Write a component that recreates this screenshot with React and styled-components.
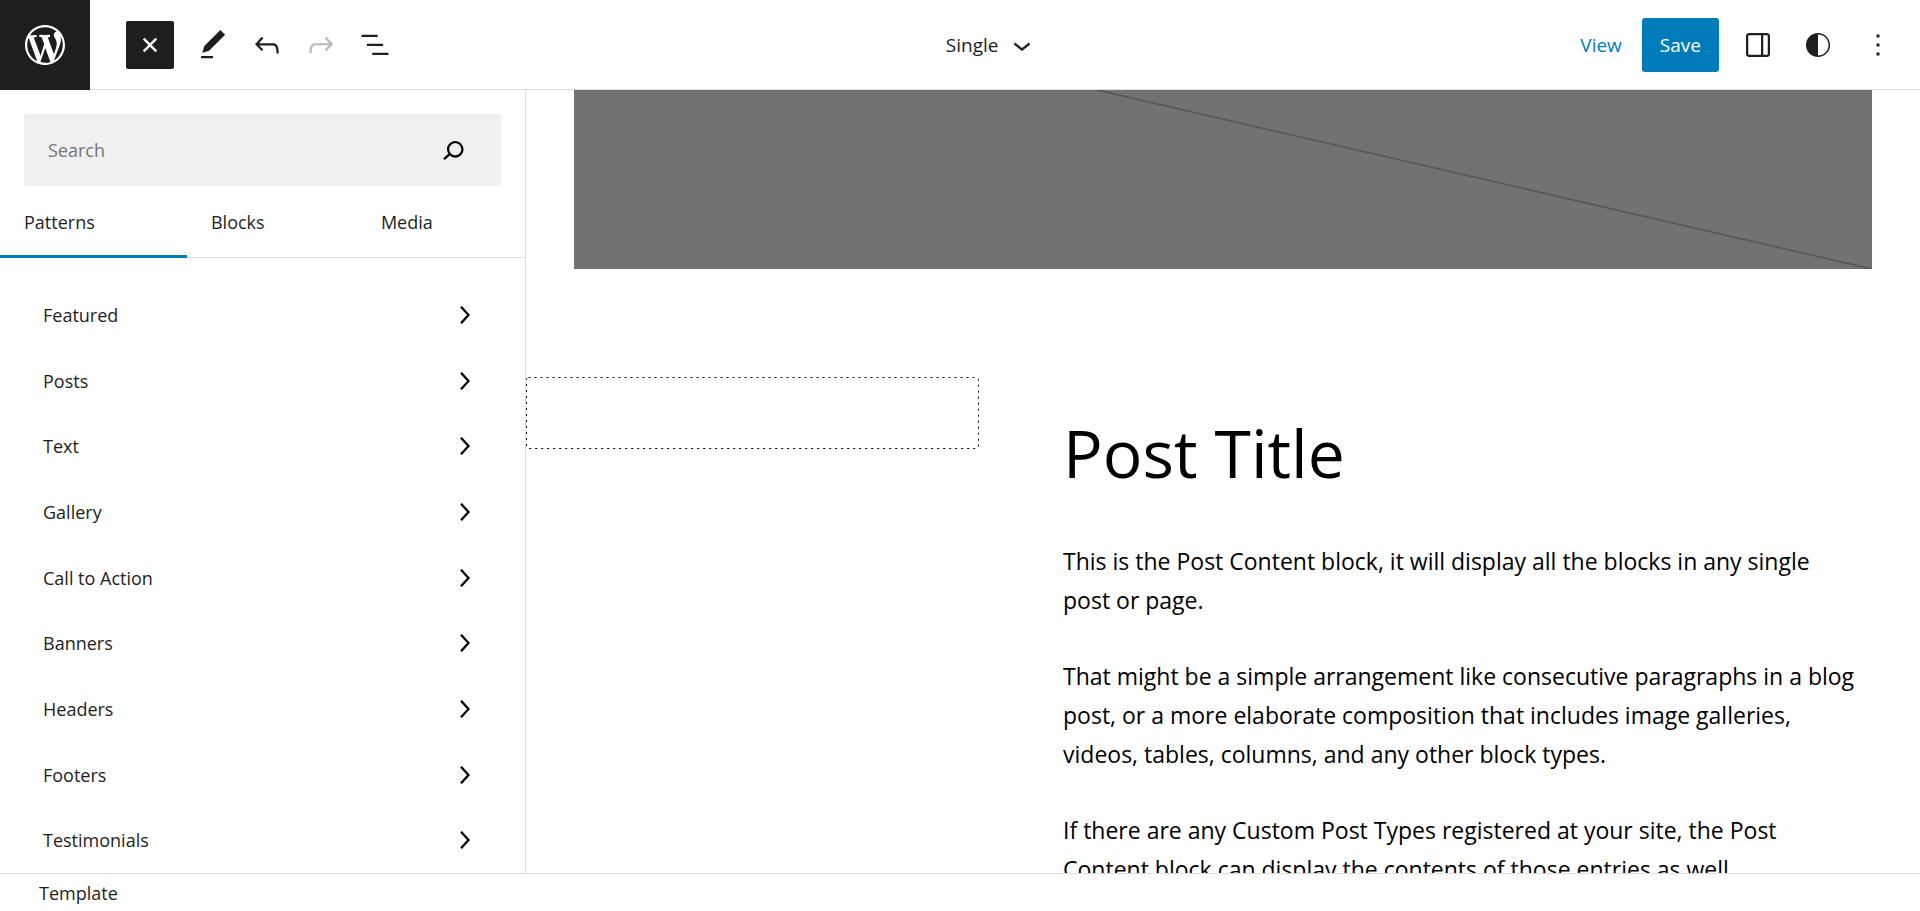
import React from "react";
import styled, { createGlobalStyle } from "styled-components";

const icons = {
  wordpress:
    "M20 10c0-5.51-4.49-10-10-10C4.48 0 0 4.49 0 10c0 5.52 4.48 10 10 10 5.51 0 10-4.48 10-10zM7.78 15.37L4.37 6.22c.55-.02 1.17-.08 1.17-.08.5-.06.44-1.13-.06-1.11 0 0-1.45.11-2.37.11-.18 0-.37 0-.58-.01C4.12 2.69 6.87 1.11 10 1.11c2.33 0 4.45.87 6.05 2.34-.68-.11-1.65.39-1.65 1.58 0 .74.45 1.36.9 2.1.35.61.55 1.36.55 2.46 0 1.49-1.4 5-1.4 5l-3.03-8.37c.54-.02.82-.17.82-.17.5-.05.44-1.25-.06-1.22 0 0-1.44.12-2.38.12-.87 0-2.33-.12-2.33-.12-.5-.03-.56 1.2-.06 1.22l.92.08 1.26 3.41zM17.41 10c.24-.64.74-1.87.43-4.25.7 1.29 1.05 2.71 1.05 4.25 0 3.29-1.73 6.24-4.4 7.78.97-2.59 1.94-5.2 2.92-7.78zM6.1 18.09C3.12 16.65 1.11 13.53 1.11 10c0-1.3.23-2.48.72-3.59C3.25 10.3 4.67 14.2 6.1 18.09zm4.03-6.63l2.58 6.98c-.86.29-1.76.45-2.71.45-.79 0-1.57-.11-2.29-.33.81-2.38 1.62-4.74 2.42-7.1z",
  close:
    "M12 13.13l3.64 3.64 1.13-1.13L13.13 12l3.64-3.64-1.13-1.13L12 10.87 8.36 7.23 7.23 8.36 10.87 12l-3.64 3.64 1.13 1.13z",
  edit: "M20.1 5.1L16.9 2 6.2 12.7l-1.3 4.4 4.5-1.3L20.1 5.1zM4 20.8h8v-1.5H4v1.5z",
  undo: "M18.3 11.7c-.6-.6-1.4-.9-2.3-.9H6.7l2.9-3.3-1.1-1-4.5 5L8.5 16l1-1-2.7-2.7H16c.5 0 .9.2 1.3.5 1 1 1 3.4 1 4.5v.3h1.5v-.2c0-1.5 0-4.3-1.5-5.7z",
  redo: "M15.6 6.5l-1.1 1 2.9 3.3H8c-.9 0-1.7.3-2.3.9-1.4 1.5-1.4 4.2-1.4 5.6v.2h1.5v-.3c0-1.1 0-3.5 1-4.5.3-.3.7-.5 1.3-.5h9.2L14.5 15l1.1 1.1 4.6-4.6-4.6-5z",
  listView:
    "M13.8 5.2H3v1.5h10.8V5.2zm-3.6 12v1.5H21v-1.5H10.2zm7.2-6H6.6v1.5h10.8v-1.5z",
  chevronDown: "M17.5 11.6L12 16l-5.5-4.4.9-1.2L12 14l4.5-3.6 1 1.2z",
  chevronRight: "M10.6 6L9.4 7l4.6 5-4.6 5 1.2 1 5.4-6z",
  search:
    "M13.5 6C10.5 6 8 8.5 8 11.5c0 1.1.3 2.1.9 3l-3.4 3 1 1.1 3.4-2.9c1 .9 2.2 1.4 3.6 1.4 3 0 5.5-2.5 5.5-5.5C19 8.5 16.5 6 13.5 6zm0 9.5c-2.2 0-4-1.8-4-4s1.8-4 4-4 4 1.8 4 4-1.8 4-4 4z",
  sidebar:
    "M18 4H6c-1.1 0-2 .9-2 2v12c0 1.1.9 2 2 2h12c1.1 0 2-.9 2-2V6c0-1.1-.9-2-2-2zm-4 14.5H6c-.3 0-.5-.2-.5-.5V6c0-.3.2-.5.5-.5h8v13zm4.5-.5c0 .3-.2.5-.5.5h-2.5v-13H18c.3 0 .5.2.5.5v12z",
  styles:
    "M12 4c-4.4 0-8 3.6-8 8s3.6 8 8 8 8-3.6 8-8-3.6-8-8-8zm0 15V5c3.9 0 7 3.1 7 7s-3.1 7-7 7z",
  more: "M13 19h-2v-2h2v2zm0-6h-2v-2h2v2zm0-6h-2V5h2v2z",
};

const tabs = ["Patterns", "Blocks", "Media"];

const categories = [
  "Featured",
  "Posts",
  "Text",
  "Gallery",
  "Call to Action",
  "Banners",
  "Headers",
  "Footers",
  "Testimonials",
];

const paragraphs = [
  "This is the Post Content block, it will display all the blocks in any single post or page.",
  "That might be a simple arrangement like consecutive paragraphs in a blog post, or a more elaborate composition that includes image galleries, videos, tables, columns, and any other block types.",
  "If there are any Custom Post Types registered at your site, the Post Content block can display the contents of those entries as well.",
];

const Icon = ({ name, size = 36, viewBox = "0 0 24 24" }) => (
  <svg
    width={size}
    height={size}
    viewBox={viewBox}
    fill="currentColor"
    aria-hidden="true"
  >
    <path d={icons[name]} />
  </svg>
);

const Header = () => (
  <TopBar>
    <HomeLink href="#dashboard" aria-label="Dashboard">
      <Icon name="wordpress" size={48} viewBox="-2 -2 24 24" />
    </HomeLink>
    <Tools>
      <InserterButton aria-label="Close block inserter">
        <Icon name="close" />
      </InserterButton>
      <ToolGroup>
        <IconButton aria-label="Edit">
          <Icon name="edit" />
        </IconButton>
        <IconButton aria-label="Undo">
          <Icon name="undo" />
        </IconButton>
        <IconButton aria-label="Redo" disabled>
          <Icon name="redo" />
        </IconButton>
        <IconButton aria-label="List View">
          <Icon name="listView" />
        </IconButton>
      </ToolGroup>
    </Tools>
    <DocumentArea>
      <DocumentButton>
        Single
        <Icon name="chevronDown" />
      </DocumentButton>
    </DocumentArea>
    <Actions>
      <ViewLink href="#view">View</ViewLink>
      <SaveButton>Save</SaveButton>
      <IconButton aria-label="Settings">
        <Icon name="sidebar" />
      </IconButton>
      <IconButton aria-label="Styles">
        <Icon name="styles" />
      </IconButton>
      <IconButton aria-label="Options">
        <Icon name="more" />
      </IconButton>
    </Actions>
  </TopBar>
);

const Inserter = () => {
  const [active, setActive] = React.useState("Patterns");

  return (
    <Sidebar>
      <SearchBox>
        <input type="text" placeholder="Search" aria-label="Search" />
        <Icon name="search" />
      </SearchBox>
      <TabList role="tablist">
        {tabs.map((tab) => (
          <Tab
            key={tab}
            role="tab"
            aria-selected={tab === active}
            $active={tab === active}
            onClick={() => setActive(tab)}
          >
            {tab}
          </Tab>
        ))}
      </TabList>
      <CategoryList>
        {categories.map((category) => (
          <li key={category}>
            <CategoryButton>
              {category}
              <Icon name="chevronRight" />
            </CategoryButton>
          </li>
        ))}
      </CategoryList>
    </Sidebar>
  );
};

const Canvas = () => (
  <CanvasArea>
    <FeaturedImage>
      <svg width="100%" height="100%" aria-hidden="true">
        <line
          x1="40.3%"
          y1="0"
          x2="100%"
          y2="100%"
          stroke="#555"
          strokeWidth="1.5"
        />
      </svg>
    </FeaturedImage>
    <Columns>
      <EmptyBlock>
        <svg width="100%" height="100%" aria-hidden="true">
          <rect x="0.5" y="0.5" rx="2" />
        </svg>
      </EmptyBlock>
      <article>
        <Title>Post Title</Title>
        {paragraphs.map((text) => (
          <Paragraph key={text}>{text}</Paragraph>
        ))}
      </article>
    </Columns>
  </CanvasArea>
);

const App = () => (
  <>
    <GlobalStyle />
    <Editor>
      <Header />
      <Body>
        <Inserter />
        <Canvas />
      </Body>
      <Footer>Template</Footer>
    </Editor>
  </>
);

const GlobalStyle = createGlobalStyle`
  * {
    box-sizing: border-box;
  }
  body {
    margin: 0;
    background-color: #fff;
    color: #1e1e1e;
    font-family: "Segoe UI", "Open Sans", sans-serif;
    font-size: 18px;
    line-height: 24px;
  }
  button,
  input {
    font: inherit;
    color: inherit;
    border: 0;
    padding: 0;
    background: none;
  }
  button {
    cursor: pointer;
  }
  svg {
    display: block;
    flex-shrink: 0;
  }
`;

const Editor = styled.div`
  display: flex;
  flex-direction: column;
  height: 100vh;
`;

const TopBar = styled.header`
  display: flex;
  align-items: stretch;
  height: 90px;
  flex-shrink: 0;
  font-size: 19px;
  box-shadow: inset 0 -1px 0 #ddd;
`;

const HomeLink = styled.a`
  display: flex;
  align-items: center;
  justify-content: center;
  width: 90px;
  background-color: #1e1e1e;
  color: #fff;
`;

const Tools = styled.div`
  display: flex;
  align-items: center;
  gap: 12px;
  padding: 0 18px 0 36px;
`;

const ToolGroup = styled.div`
  display: flex;
`;

const IconButton = styled.button`
  display: flex;
  align-items: center;
  justify-content: center;
  width: 54px;
  height: 54px;
  &:disabled {
    color: #bbb;
    cursor: default;
  }
`;

const InserterButton = styled(IconButton)`
  width: 48px;
  height: 48px;
  border-radius: 2px;
  background-color: #1e1e1e;
  color: #fff;
`;

const DocumentArea = styled.div`
  display: flex;
  flex: 1;
  align-items: center;
  justify-content: center;
`;

const DocumentButton = styled.button`
  display: flex;
  align-items: center;
  gap: 6px;
`;

const Actions = styled.div`
  display: flex;
  align-items: center;
  gap: 6px;
  padding-right: 15px;
`;

const ViewLink = styled.a`
  padding: 0 14px;
  color: #007cba;
  text-decoration: none;
`;

const SaveButton = styled.button`
  height: 54px;
  padding: 0 18px;
  margin-right: 6px;
  border-radius: 3px;
  background-color: #007cba;
  color: #fff;
`;

const Body = styled.div`
  display: flex;
  flex: 1;
  min-height: 0;
`;

const Sidebar = styled.aside`
  display: flex;
  flex-direction: column;
  flex: 0 0 526px;
  border-right: 1px solid #ddd;
`;

const SearchBox = styled.label`
  display: flex;
  align-items: center;
  height: 72px;
  flex-shrink: 0;
  margin: 24px 24px 0;
  padding: 0 30px 0 24px;
  border-radius: 3px;
  background-color: #f0f0f0;
  color: #000;
  input {
    flex: 1;
    min-width: 0;
    outline: none;
  }
  input::placeholder {
    color: #757575;
    opacity: 1;
  }
`;

const TabList = styled.div`
  display: flex;
  height: 72px;
  flex-shrink: 0;
  box-shadow: inset 0 -1px 0 #ddd;
`;

const Tab = styled.button`
  flex: 1 1 auto;
  padding: 0 24px;
  text-align: left;
  box-shadow: ${({ $active }) => ($active ? "inset 0 -3px 0 #007cba" : "none")};
`;

const CategoryList = styled.ul`
  display: flex;
  flex-direction: column;
  flex: 1;
  min-height: 0;
  margin: 0;
  padding: 24px 24px 0;
  list-style: none;
  li {
    display: flex;
    flex: 1;
  }
`;

const CategoryButton = styled.button`
  display: flex;
  flex: 1;
  align-items: center;
  justify-content: space-between;
  padding: 0 19px;
  svg {
    color: #000;
  }
`;

const CanvasArea = styled.main`
  flex: 1;
  min-width: 0;
  overflow: hidden;
  color: #000;
`;

const FeaturedImage = styled.div`
  height: 179px;
  margin: 0 48px 108px;
  background-color: #727272;
`;

const Columns = styled.div`
  display: grid;
  grid-template-columns: 14fr 25fr;
  align-items: start;
  column-gap: 84px;
  padding-right: 48px;
`;

const EmptyBlock = styled.div`
  height: 72px;
  rect {
    width: calc(100% - 1px);
    height: calc(100% - 1px);
    fill: none;
    stroke: #000;
    stroke-dasharray: 2 4;
  }
`;

const Title = styled.h1`
  margin: 33px 0 48px;
  font-size: 66px;
  font-weight: 400;
  line-height: 84px;
`;

const Paragraph = styled.p`
  margin: 0 0 37px;
  padding-right: 14px;
  font-size: 23px;
  line-height: 39px;
`;

const Footer = styled.footer`
  display: flex;
  align-items: center;
  height: 38px;
  flex-shrink: 0;
  padding: 0 39px;
  border-top: 1px solid #ddd;
`;

export default App;
